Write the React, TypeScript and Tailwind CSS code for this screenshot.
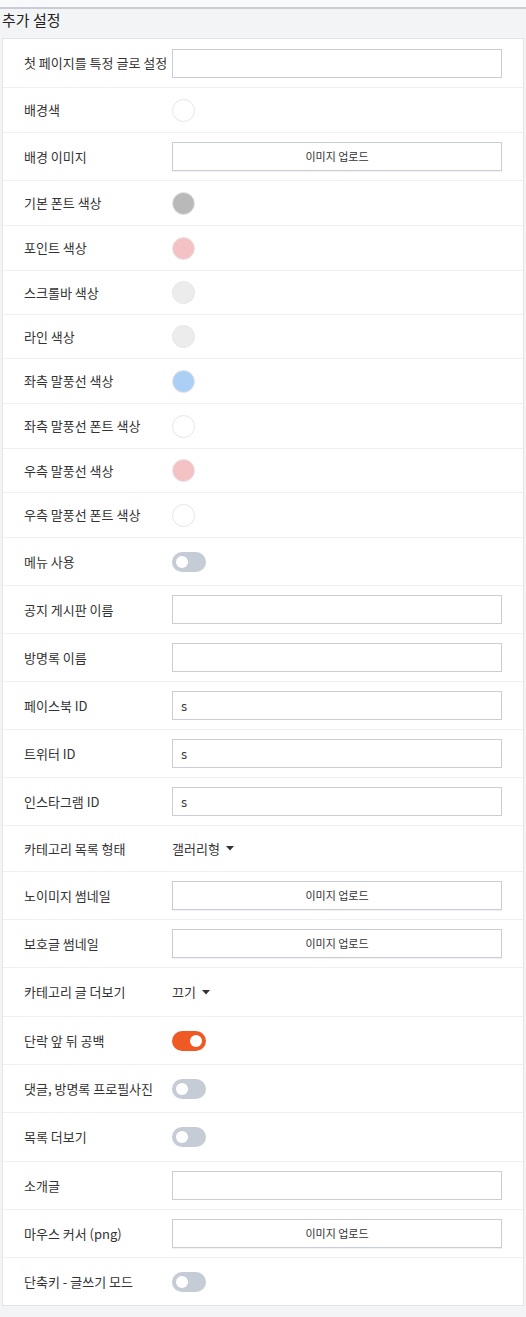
type Kind = "input" | "color" | "upload" | "toggle" | "select";

type Row = {
  label: string;
  kind: Kind;
  h: string;
  value?: string;
  color?: string;
  on?: boolean;
};

const rows: Row[] = [
  { label: "첫 페이지를 특정 글로 설정", kind: "input", h: "h-[48px]" },
  { label: "배경색", kind: "color", h: "h-[45px]", color: "bg-white" },
  { label: "배경 이미지", kind: "upload", h: "h-[48px]" },
  { label: "기본 폰트 색상", kind: "color", h: "h-[45px]", color: "bg-[#b9b9b9]" },
  { label: "포인트 색상", kind: "color", h: "h-[45px]", color: "bg-[#f4c2c4]" },
  { label: "스크롤바 색상", kind: "color", h: "h-[44px]", color: "bg-[#ececec]" },
  { label: "라인 색상", kind: "color", h: "h-[44px]", color: "bg-[#ececec]" },
  { label: "좌측 말풍선 색상", kind: "color", h: "h-[45px]", color: "bg-[#acd0f5]" },
  { label: "좌측 말풍선 폰트 색상", kind: "color", h: "h-[45px]", color: "bg-white" },
  { label: "우측 말풍선 색상", kind: "color", h: "h-[44px]", color: "bg-[#f4c2c4]" },
  { label: "우측 말풍선 폰트 색상", kind: "color", h: "h-[45px]", color: "bg-white" },
  { label: "메뉴 사용", kind: "toggle", h: "h-[48px]" },
  { label: "공지 게시판 이름", kind: "input", h: "h-[48px]" },
  { label: "방명록 이름", kind: "input", h: "h-[48px]" },
  { label: "페이스북 ID", kind: "input", h: "h-[48px]", value: "s" },
  { label: "트위터 ID", kind: "input", h: "h-[48px]", value: "s" },
  { label: "인스타그램 ID", kind: "input", h: "h-[48px]", value: "s" },
  { label: "카테고리 목록 형태", kind: "select", h: "h-[46px]", value: "갤러리형" },
  { label: "노이미지 썸네일", kind: "upload", h: "h-[48px]" },
  { label: "보호글 썸네일", kind: "upload", h: "h-[48px]" },
  { label: "카테고리 글 더보기", kind: "select", h: "h-[49px]", value: "끄기" },
  { label: "단락 앞 뒤 공백", kind: "toggle", h: "h-[48px]", on: true },
  { label: "댓글, 방명록 프로필사진", kind: "toggle", h: "h-[48px]" },
  { label: "목록 더보기", kind: "toggle", h: "h-[49px]" },
  { label: "소개글", kind: "input", h: "h-[48px]" },
  { label: "마우스 커서 (png)", kind: "upload", h: "h-[48px]" },
  { label: "단축키 - 글쓰기 모드", kind: "toggle", h: "h-[48px]" },
];

function Control({ row }: { row: Row }) {
  switch (row.kind) {
    case "input":
      return (
        <div className="flex h-[29px] w-[330px] items-center border border-[#c7ced8] bg-white px-2 text-[13px] text-[#333]">
          {row.value}
        </div>
      );
    case "upload":
      return (
        <div className="flex h-[29px] w-[330px] items-center justify-center border border-[#c7ced8] bg-white text-[11px] text-[#333] shadow-[0_1px_1px_rgba(0,0,0,0.05)]">
          이미지 업로드
        </div>
      );
    case "color":
      return (
        <div
          className={`h-[23px] w-[23px] rounded-full border border-[#e6e6e6] ${row.color}`}
        />
      );
    case "toggle":
      return row.on ? (
        <div className="flex h-[20px] w-[34px] items-center justify-end rounded-full bg-[#ef5a24] pr-[4px]">
          <div className="h-[12px] w-[12px] rounded-full bg-white" />
        </div>
      ) : (
        <div className="flex h-[20px] w-[34px] items-center rounded-full bg-[#c6ccd5] pl-[4px]">
          <div className="h-[12px] w-[12px] rounded-full bg-white" />
        </div>
      );
    case "select":
      return (
        <div className="flex items-center gap-[6px] text-[13px] text-[#333]">
          <span>{row.value}</span>
          <svg width="8" height="5" viewBox="0 0 8 5">
            <path d="M0 0h8L4 4.5z" fill="#333" />
          </svg>
        </div>
      );
  }
}

export default function App() {
  return (
    <div
      className="min-h-[1317px] w-[526px] bg-[#f3f4f6]"
      style={{ fontFamily: '"Noto Sans CJK KR", "Noto Sans", sans-serif' }}
    >
      <div className="h-[9px] border-b-2 border-[#c8cdd5] bg-[#f8f9fb]" />
      <h2 className="ml-[2px] h-[29px] text-[15px] leading-[22px] text-[#222]">
        추가 설정
      </h2>
      <div className="ml-[2px] mr-[2px] border border-[#e1e5ea] bg-white">
        {rows.map((row, i) => (
          <div
            key={row.label}
            className={`flex items-center ${row.h} ${
              i > 0 ? "border-t border-[#eef0f2]" : ""
            }`}
          >
            <div className="w-[169px] shrink-0 pl-[21px] text-[13px] text-[#333]">
              {row.label}
            </div>
            <Control row={row} />
          </div>
        ))}
      </div>
    </div>
  );
}
